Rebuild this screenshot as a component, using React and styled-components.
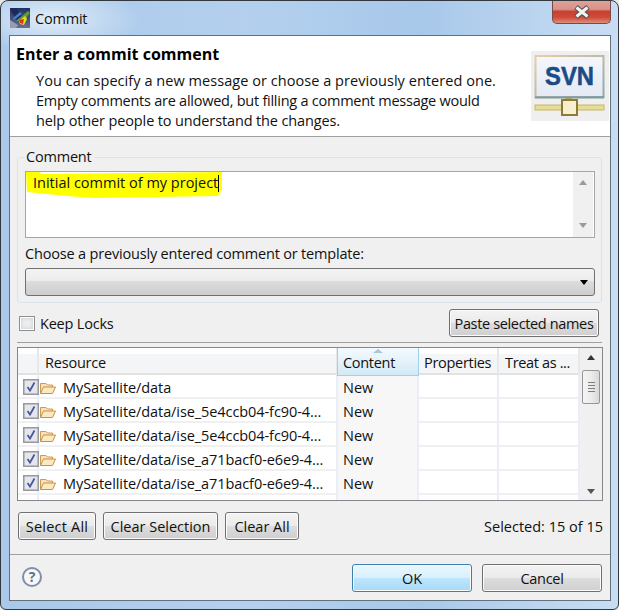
import React from "react";
import styled, { createGlobalStyle } from "styled-components";

const Global = createGlobalStyle`
  html, body { margin: 0; padding: 0; background: #e8e8e8; }
  * { box-sizing: border-box; }
`;

const FONT = `"Open Sans", "Noto Sans", "Liberation Sans", sans-serif`;

const Win = styled.div`
  width: 619px;
  height: 610px;
  border: 1px solid #33383e;
  border-radius: 8px 8px 6px 6px;
  padding: 0 7px 8px 8px;
  display: flex;
  flex-direction: column;
  overflow: hidden;
  font-family: ${FONT};
  font-size: 14.5px;
  letter-spacing: 0;
  color: #111;
  background:
    radial-gradient(ellipse 90px 34px at 50px 18px, rgba(226, 238, 248, 0.95), rgba(226, 238, 248, 0) 100%),
    linear-gradient(90deg, #a9c8ea 0%, #b4d0ee 40%, #a8c8ea 68%, #c8ddf3 100%);
`;

const TitleBar = styled.div`
  height: 34px;
  flex: none;
  display: flex;
  align-items: flex-start;
`;

const AppIcon = styled.svg`
  width: 20px;
  height: 20px;
  margin: 7px 5px 0 1px;
  flex: none;
`;

const TitleText = styled.span`
  flex: 1;
  line-height: 20px;
  margin-top: 8px;
  letter-spacing: -0.2px;
`;

const CloseButton = styled.div`
  width: 59px;
  height: 24px;
  margin-top: -1px;
  border: 1px solid #7c4a44;
  border-top: none;
  border-radius: 0 0 5px 5px;
  background: linear-gradient(180deg, #e0a398 0%, #d9938a 40%, #c8412f 50%, #cf4a36 75%, #dc8f80 100%);
  display: flex;
  align-items: center;
  justify-content: center;
`;

const Dialog = styled.div`
  flex: 1;
  min-height: 0;
  border: 1px solid #66707c;
  background: #f0f0f0;
  display: flex;
  flex-direction: column;
`;

const Banner = styled.header`
  height: 101px;
  flex: none;
  background: #fff;
  border-bottom: 1px solid #a0a0a0;
  display: flex;
  justify-content: space-between;
`;

const BannerText = styled.div`
  padding: 8px 0 0 6px;
`;

const Heading = styled.h1`
  margin: 0 0 7px;
  font-size: 16px;
  line-height: 20px;
  font-weight: 700;
  letter-spacing: 0;
  color: #000;
`;

const Intro = styled.p`
  margin: 0 0 0 20px;
  line-height: 20px;
  white-space: nowrap;
  letter-spacing: ${(p) => p.$ls}px;
`;

const Logo = styled.svg`
  width: 78px;
  height: 70px;
  margin: 15px 1px 0 0;
  flex: none;
`;

const CommentGroup = styled.fieldset`
  margin: 10px 8px 0 7px;
  padding: 4px 6px 6px 7px;
  border: 1px solid #dbe3ea;
  border-radius: 3px;
  min-width: 0;
`;

const GroupLegend = styled.legend`
  padding: 0 2px;
  margin-left: -1px;
  line-height: 20px;
  letter-spacing: -0.2px;
`;

const CommentBox = styled.div`
  position: relative;
  height: 67px;
  border: 1px solid #a5a5a5;
  background: #fff;
  display: flex;
  justify-content: space-between;
`;

const Highlight = styled.svg`
  position: absolute;
  left: 0;
  top: 0;
  width: 200px;
  height: 30px;
`;

const CommentText = styled.div`
  position: relative;
  padding: 1px 0 0 7px;
  line-height: 20px;
  height: 21px;
  &::after {
    content: "";
    display: inline-block;
    width: 1px;
    height: 17px;
    background: #000;
    vertical-align: -4px;
  }
`;

const ScrollTrack = styled.div`
  width: ${(p) => p.$w}px;
  flex: none;
  background: #f0f0f0;
  display: flex;
  flex-direction: column;
  align-items: center;
  justify-content: space-between;
`;

const BoxBar = styled(ScrollTrack)`
  margin-right: 1px;
  padding: 8px 0 9px;
`;

const Triangle = styled.span`
  width: 0;
  height: 0;
  border-left: 4.5px solid transparent;
  border-right: 4.5px solid transparent;
  ${(p) =>
    p.$down
      ? `border-top: 5px solid ${p.$c || "#9a9a9a"};`
      : `border-bottom: 5px solid ${p.$c || "#9a9a9a"};`}
`;

const ChooseLabel = styled.label`
  display: block;
  margin-top: 6px;
  line-height: 20px;
  letter-spacing: -0.18px;
`;

const Combo = styled.div`
  height: 28px;
  margin-top: 4px;
  border: 1px solid #707070;
  border-radius: 3px;
  background: linear-gradient(180deg, #f3f3f3 0%, #ececec 45%, #dcdcdc 48%, #cdcdcd 100%);
  display: flex;
  align-items: center;
  justify-content: flex-end;
  padding-right: 6px;
`;

const KeepRow = styled.div`
  margin: 6px 11px 0 9px;
  display: flex;
  align-items: center;
  justify-content: space-between;
`;

const KeepLabel = styled.label`
  display: flex;
  align-items: center;
  gap: 5px;
  letter-spacing: -0.2px;
`;

const EmptyBox = styled.span`
  width: 16px;
  height: 15px;
  margin-top: 1px;
  border: 1px solid #8e8f8f;
  box-shadow: inset 0 0 0 1px #fff, inset 0 0 4px 1px #c9ccd2;
  background: #eceef0;
`;

const Button = styled.button`
  width: ${(p) => p.$w}px;
  height: 28px;
  padding: 0;
  font: inherit;
  letter-spacing: ${(p) => p.$ls || 0}px;
  color: #111;
  border: 1px solid ${(p) => (p.$primary ? "#3c7fb1" : "#707070")};
  border-radius: 3px;
  box-shadow: inset 0 0 0 1px #fbfbfb;
  background: ${(p) =>
    p.$primary
      ? "linear-gradient(180deg, #ebf7fe 0%, #d9f0fc 48%, #bee6fd 50%, #a7d9f5 100%)"
      : "linear-gradient(180deg, #f3f3f3 0%, #ebebeb 48%, #dddddd 50%, #cfcfcf 100%)"};
`;

const SashLine = styled.div`
  height: 1px;
  margin: 5px 8px 4px 7px;
  background: #a0a0a0;
  flex: none;
`;

const ResourceTable = styled.div`
  height: 154px;
  margin: 0 7px 0 7px;
  border: 1px solid #82878c;
  background: #fff;
  display: flex;
  flex: none;
`;

const TableMain = styled.div`
  width: 562px;
  flex: none;
  overflow: hidden;
`;

const HeaderRow = styled.div`
  height: 27px;
  display: grid;
  grid-template-columns: 21px 299px 81px 80px 81px;
  border-bottom: 2px solid #e2e2e2;
  background: linear-gradient(180deg, #fff 0%, #fff 25%, #f4f5f6 26%, #f4f5f6 100%);
`;

const HeaderCell = styled.div`
  position: relative;
  padding: 3px 0 0 ${(p) => p.$pad || 6}px;
  line-height: 24px;
  white-space: nowrap;
  letter-spacing: ${(p) => p.$ls || -0.2}px;
  border-right: 2px solid #e6e8ea;
  ${(p) =>
    p.$active &&
    `background: linear-gradient(180deg, #f3fafe 0%, #e6f3fb 45%, #d3e9f6 100%);
     border-left: 1px solid #9fd0ee;
     border-right: 1px solid #9fd0ee;
     border-bottom: 1px solid #9fd0ee;
     margin-left: -1px;`}
`;

const SortMark = styled.span`
  position: absolute;
  top: 1px;
  left: 35px;
  width: 0;
  height: 0;
  border-left: 5px solid transparent;
  border-right: 5px solid transparent;
  border-bottom: 4px solid #a9c6d8;
`;

const Row = styled.div`
  height: 24px;
  display: grid;
  grid-template-columns: 21px 299px 81px 80px 81px;
  border-bottom: 2px solid #f0f0f0;
`;

const CheckCell = styled.div`
  padding: 4px 0 0 5px;
  border-right: 2px solid #e9eef7;
  position: relative;
`;

const NameCell = styled.div`
  display: flex;
  align-items: center;
  padding: 1px 0 0 1px;
  border-right: 2px solid #e9eef7;
  white-space: nowrap;
  overflow: hidden;
  letter-spacing: -0.08px;
`;

const FolderIcon = styled.svg`
  width: 16px;
  height: 16px;
  margin-right: 7px;
  flex: none;
`;

const ValueCell = styled.div`
  padding: 2px 0 0 5px;
  line-height: 22px;
  border-right: 2px solid #e9eef7;
  background: ${(p) => (p.$tint ? "#f7f7f7" : "transparent")};
`;

const CheckBox = styled.svg`
  width: 16px;
  height: 16px;
  flex: none;
  position: relative;
  z-index: 1;
`;

const TableBar = styled(ScrollTrack)`
  padding: 1px 1px 6px;
`;

const ArrowSlot = styled.div`
  height: 17px;
  display: flex;
  align-items: center;
  justify-content: center;
`;

const Thumb = styled.div`
  width: 18px;
  height: 34px;
  margin-top: 4px;
  margin-bottom: auto;
  border: 1px solid #979797;
  border-radius: 2px;
  background: linear-gradient(90deg, #f4f4f4 0%, #ececec 50%, #d8d8d8 100%);
  display: flex;
  flex-direction: column;
  align-items: center;
  justify-content: center;
  gap: 2px;
`;

const Grip = styled.span`
  width: 7px;
  height: 1px;
  background: #7d7d7d;
`;

const ActionRow = styled.div`
  margin: 11px 7px 0 8px;
  height: 28px;
  flex: none;
  display: flex;
  align-items: center;
  gap: 7px;
`;

const Selected = styled.span`
  margin-left: auto;
`;

const Separator = styled.div`
  height: 1px;
  margin-top: 14px;
  background: #a0a0a0;
  flex: none;
`;

const Footer = styled.footer`
  padding: 9px 8px 0 12px;
  display: flex;
  align-items: flex-start;
  gap: 10px;
`;

const Help = styled.span`
  width: 20px;
  height: 20px;
  margin-top: 3px;
  margin-right: auto;
  border: 2px solid #7d8fab;
  border-radius: 50%;
  background: #f6f7f9;
  display: flex;
  align-items: center;
  justify-content: center;
  font-size: 14px;
  font-weight: 700;
  line-height: 1;
  color: #6a7180;
`;

const Check = () => (
  <CheckBox viewBox="0 0 16 16">
    <rect x="0.75" y="0.75" width="14.5" height="14.5" fill="#dde0e7" stroke="#979a9e" strokeWidth="1.5" />
    <rect x="2" y="2" width="12" height="12" fill="#e3e6ec" />
    <path d="M4.5 8 L7 11.5 L11.5 3.5" fill="none" stroke="#4a5a98" strokeWidth="1.8" />
  </CheckBox>
);

const Folder = () => (
  <FolderIcon viewBox="0 0 16 16">
    <path d="M0.5 13 V3.5 H6 L7.5 5 H12.5 V7" fill="#f5e4bb" stroke="#c99a55" strokeWidth="1" />
    <path d="M0.5 13.5 L3.5 7 H15.5 L12.5 13.5 Z" fill="#fbe9bf" stroke="#c98f44" strokeWidth="1" />
  </FolderIcon>
);

const rows = [
  "MySatellite/data",
  "MySatellite/data/ise_5e4ccb04-fc90-4...",
  "MySatellite/data/ise_5e4ccb04-fc90-4...",
  "MySatellite/data/ise_a71bacf0-e6e9-4...",
  "MySatellite/data/ise_a71bacf0-e6e9-4...",
];

export default function App() {
  return (
    <>
      <Global />
      <Win>
        <TitleBar>
          <AppIcon viewBox="0 0 20 20">
            <defs>
              <linearGradient id="ai" x1="0" y1="0" x2="0" y2="1">
                <stop offset="0" stopColor="#20305f" />
                <stop offset="1" stopColor="#6a7090" />
              </linearGradient>
            </defs>
            <rect width="20" height="20" fill="url(#ai)" />
            <path d="M0 0 L6 0 L12 8 L6 12 Z" fill="#1c2a58" />
            <path d="M6 13 L18 3 L20 5 L14 13 Z" fill="#5f9a3a" />
            <path d="M9 13 L15 8 L17 11 L14 17 L10 16 Z" fill="#e8dc1c" />
            <path d="M9 12 L14 11 L13 16 L10 15 Z" fill="#d33a1e" />
            <path d="M4 12 L12 6 L10 4 L3 10 Z" fill="#3f7fd0" />
            <path d="M0 12 L8 17 L6 20 L0 20 Z" fill="#9a9ab0" />
          </AppIcon>
          <TitleText>Commit</TitleText>
          <CloseButton>
            <svg width="16" height="14" viewBox="0 0 16 14">
              <path d="M2 2 L14 12 M14 2 L2 12" stroke="#4d4d55" strokeWidth="5" fill="none" />
              <path d="M2.5 2.5 L13.5 11.5 M13.5 2.5 L2.5 11.5" stroke="#f2f2f2" strokeWidth="3" fill="none" />
            </svg>
          </CloseButton>
        </TitleBar>
        <Dialog>
          <Banner>
            <BannerText>
              <Heading>Enter a commit comment</Heading>
              <Intro $ls={0.05}>You can specify a new message or choose a previously entered one.</Intro>
              <Intro $ls={-0.25}>Empty comments are allowed, but filling a comment message would</Intro>
              <Intro $ls={-0.13}>help other people to understand the changes.</Intro>
            </BannerText>
            <Logo viewBox="0 0 78 70">
              <defs>
                <linearGradient id="sv" x1="0" y1="0" x2="0" y2="1">
                  <stop offset="0" stopColor="#f4f6fb" />
                  <stop offset="1" stopColor="#e4e9f4" />
                </linearGradient>
                <linearGradient id="sb" x1="0" y1="0" x2="1" y2="1">
                  <stop offset="0" stopColor="#e6cfa6" />
                  <stop offset="1" stopColor="#8ea8ac" />
                </linearGradient>
              </defs>
              <rect width="78" height="70" fill="#efefef" />
              <rect x="4.5" y="5" width="68" height="41" fill="url(#sv)" stroke="url(#sb)" strokeWidth="2" />
              <path d="M4 46.5 H73" stroke="#7d9a9e" strokeWidth="2" />
              <text
                x="38.5"
                y="34"
                textAnchor="middle"
                fontFamily="Liberation Sans, sans-serif"
                fontWeight="700"
                fontSize="25"
                fill="#1a4c85"
                stroke="#1a4c85"
                strokeWidth="0.5"
                textLength="49"
                lengthAdjust="spacingAndGlyphs"
              >
                SVN
              </text>
              <rect x="34" y="47" width="7" height="5" fill="#a8a468" />
              <rect x="4" y="54" width="69" height="5" fill="#e6dd9a" stroke="#c5b76a" strokeWidth="1" />
              <rect x="31" y="49" width="15" height="15" fill="#f7efd0" stroke="#8e7a34" strokeWidth="2" />
            </Logo>
          </Banner>

          <CommentGroup>
            <GroupLegend>Comment</GroupLegend>
            <CommentBox>
              <Highlight viewBox="0 0 200 30">
                <path
                  d="M0 0 L14 0 L15 2 L196 0 L196 18 L192 24 L130 25 L70 26 L40 24 L1 20 Z"
                  fill="#ffff00"
                />
              </Highlight>
              <CommentText>Initial commit of my project</CommentText>
              <BoxBar $w={20}>
                <Triangle />
                <Triangle $down />
              </BoxBar>
            </CommentBox>
            <ChooseLabel>Choose a previously entered comment or template:</ChooseLabel>
            <Combo>
              <Triangle $down $c="#000" />
            </Combo>
          </CommentGroup>

          <KeepRow>
            <KeepLabel>
              <EmptyBox />
              Keep Locks
            </KeepLabel>
            <Button $w={150} $ls={-0.35}>Paste selected names</Button>
          </KeepRow>

          <SashLine />

          <ResourceTable>
            <TableMain>
              <HeaderRow>
                <HeaderCell />
                <HeaderCell>Resource</HeaderCell>
                <HeaderCell $active $pad={5} $ls={-0.3}>
                  <SortMark />
                  Content
                </HeaderCell>
                <HeaderCell $pad={5} $ls={-0.3}>Properties</HeaderCell>
                <HeaderCell $ls={-0.35}>Treat as ...</HeaderCell>
              </HeaderRow>
              {rows.map((name, i) => (
                <Row key={i}>
                  <CheckCell>
                    <Check />
                  </CheckCell>
                  <NameCell>
                    <Folder />
                    {name}
                  </NameCell>
                  <ValueCell $tint>New</ValueCell>
                  <ValueCell />
                  <ValueCell />
                </Row>
              ))}
              <Row>
                <CheckCell />
                <NameCell />
                <ValueCell $tint />
                <ValueCell />
                <ValueCell />
              </Row>
            </TableMain>
            <TableBar $w={22}>
              <ArrowSlot>
                <Triangle $c="#333" />
              </ArrowSlot>
              <Thumb>
                <Grip />
                <Grip />
                <Grip />
                <Grip />
              </Thumb>
              <Triangle $down $c="#555" />
            </TableBar>
          </ResourceTable>

          <ActionRow>
            <Button $w={78} $ls={0.2}>Select All</Button>
            <Button $w={115}>Clear Selection</Button>
            <Button $w={74}>Clear All</Button>
            <Selected>Selected: 15 of 15</Selected>
          </ActionRow>

          <Separator />

          <Footer>
            <Help>?</Help>
            <Button $w={120} $primary>
              OK
            </Button>
            <Button $w={120} $ls={-0.3}>Cancel</Button>
          </Footer>
        </Dialog>
      </Win>
    </>
  );
}
